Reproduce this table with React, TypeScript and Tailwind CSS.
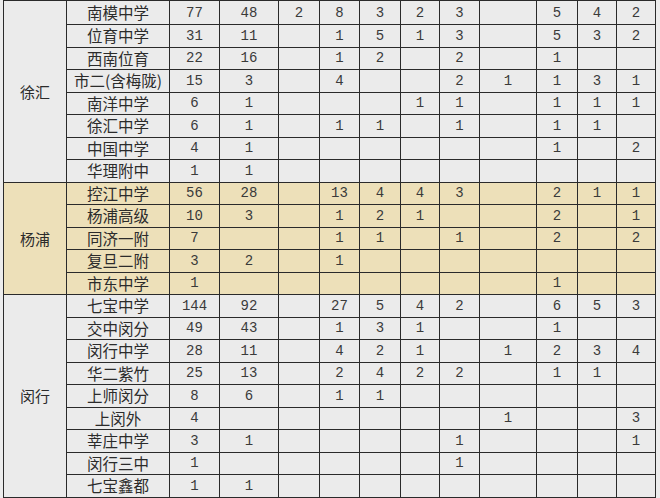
import React from 'react';

type Row = { name: string; nums: string[] };
type Group = { district: string; tan?: boolean; rows: Row[] };

const groups: Group[] = [
  {
    district: '徐汇',
    rows: [
      { name: '南模中学', nums: ['77', '48', '2', '8', '3', '2', '3', '', '5', '4', '2'] },
      { name: '位育中学', nums: ['31', '11', '', '1', '5', '1', '3', '', '5', '3', '2'] },
      { name: '西南位育', nums: ['22', '16', '', '1', '2', '', '2', '', '1', '', ''] },
      { name: '市二(含梅陇)', nums: ['15', '3', '', '4', '', '', '2', '1', '1', '3', '1'] },
      { name: '南洋中学', nums: ['6', '1', '', '', '', '1', '1', '', '1', '1', '1'] },
      { name: '徐汇中学', nums: ['6', '1', '', '1', '1', '', '1', '', '1', '1', ''] },
      { name: '中国中学', nums: ['4', '1', '', '', '', '', '', '', '1', '', '2'] },
      { name: '华理附中', nums: ['1', '1', '', '', '', '', '', '', '', '', ''] },
    ],
  },
  {
    district: '杨浦',
    tan: true,
    rows: [
      { name: '控江中学', nums: ['56', '28', '', '13', '4', '4', '3', '', '2', '1', '1'] },
      { name: '杨浦高级', nums: ['10', '3', '', '1', '2', '1', '', '', '2', '', '1'] },
      { name: '同济一附', nums: ['7', '', '', '1', '1', '', '1', '', '2', '', '2'] },
      { name: '复旦二附', nums: ['3', '2', '', '1', '', '', '', '', '', '', ''] },
      { name: '市东中学', nums: ['1', '', '', '', '', '', '', '', '1', '', ''] },
    ],
  },
  {
    district: '闵行',
    rows: [
      { name: '七宝中学', nums: ['144', '92', '', '27', '5', '4', '2', '', '6', '5', '3'] },
      { name: '交中闵分', nums: ['49', '43', '', '1', '3', '1', '', '', '1', '', ''] },
      { name: '闵行中学', nums: ['28', '11', '', '4', '2', '1', '', '1', '2', '3', '4'] },
      { name: '华二紫竹', nums: ['25', '13', '', '2', '4', '2', '2', '', '1', '1', ''] },
      { name: '上师闵分', nums: ['8', '6', '', '1', '1', '', '', '', '', '', ''] },
      { name: '上闵外', nums: ['4', '', '', '', '', '', '', '1', '', '', '3'] },
      { name: '莘庄中学', nums: ['3', '1', '', '', '', '', '1', '', '', '', '1'] },
      { name: '闵行三中', nums: ['1', '', '', '', '', '', '1', '', '', '', ''] },
      { name: '七宝鑫都', nums: ['1', '1', '', '', '', '', '', '', '', '', ''] },
    ],
  },
];

const colWidths = [63, 103, 50, 59, 41, 40, 41, 39, 40, 57, 41, 39, 39];

const cjk = "font-['Noto_Sans_CJK_SC',sans-serif]";

export default function App() {
  let rowIndex = 0;
  return (
    <div className="w-[660px] h-[498px] overflow-hidden bg-[#ececec] pl-[3px]">
      <table className="table-fixed border-collapse w-[653px] text-[#2b2b2b]">
        <colgroup>
          {colWidths.map((w, i) => (
            <col key={i} style={{ width: w }} />
          ))}
        </colgroup>
        <tbody>
          {groups.map((g) =>
            g.rows.map((r, i) => {
              const first = rowIndex === 0;
              rowIndex++;
              const bg = g.tan ? 'bg-[#ede0b9]' : 'bg-[#ebebeb]';
              return (
                <tr key={r.name} className={first ? 'h-[24px]' : 'h-[22.5px]'}>
                  {i === 0 && (
                    <td
                      rowSpan={g.rows.length}
                      className={`${bg} ${cjk} border border-[#2a2a2a] text-center text-[15px] leading-none p-0`}
                    >
                      {g.district}
                    </td>
                  )}
                  <td
                    className={`${bg} ${cjk} border border-[#2a2a2a] text-center text-[15.5px] leading-none p-0 whitespace-nowrap`}
                  >
                    {r.name}
                  </td>
                  {r.nums.map((n, j) => (
                    <td
                      key={j}
                      className={`${bg} border border-[#2a2a2a] text-center font-['Liberation_Mono',monospace] text-[14px] leading-none p-0 text-[#3a3a3a]`}
                    >
                      {n}
                    </td>
                  ))}
                </tr>
              );
            })
          )}
        </tbody>
      </table>
    </div>
  );
}
